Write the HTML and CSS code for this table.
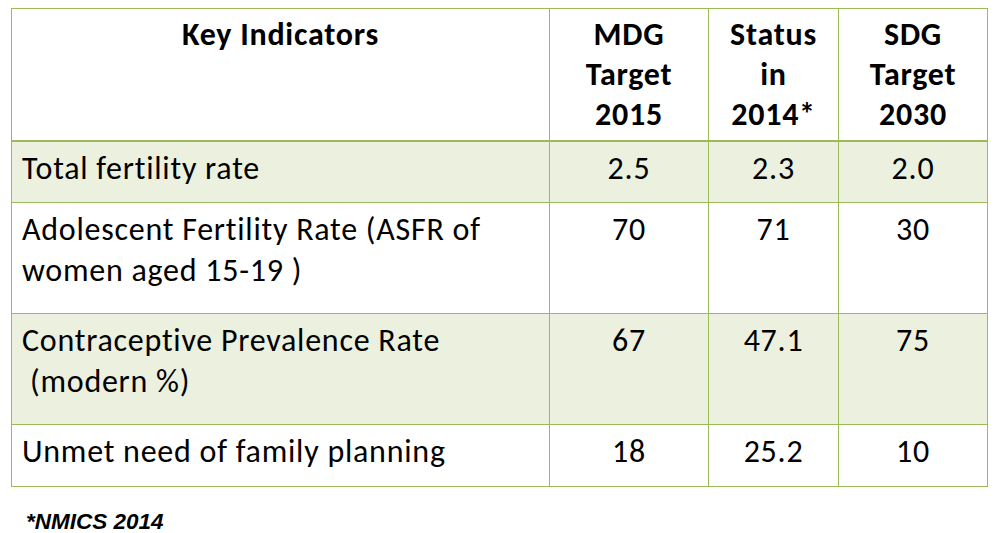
FILE: index.html
```html
<!DOCTYPE html>
<html lang="en">
<head>
<meta charset="utf-8">
<title>Key Indicators</title>
<link rel="stylesheet" href="styles.css">
</head>
<body>
<table class="indicators">
  <colgroup>
    <col class="c-name">
    <col class="c-mdg">
    <col class="c-status">
    <col class="c-sdg">
  </colgroup>
  <thead>
    <tr>
      <th>Key Indicators</th>
      <th>MDG<br>Target<br>2015</th>
      <th>Status<br>in<br>2014*</th>
      <th>SDG<br>Target<br>2030</th>
    </tr>
  </thead>
  <tbody>
    <tr class="shaded short">
      <td class="name">Total fertility rate</td>
      <td>2.5</td>
      <td>2.3</td>
      <td>2.0</td>
    </tr>
    <tr class="tall">
      <td class="name">Adolescent Fertility Rate (ASFR of women aged 15-19 )</td>
      <td>70</td>
      <td>71</td>
      <td>30</td>
    </tr>
    <tr class="shaded tall">
      <td class="name">Contraceptive Prevalence Rate<br>&nbsp;(modern %)</td>
      <td>67</td>
      <td>47.1</td>
      <td>75</td>
    </tr>
    <tr class="last">
      <td class="name">Unmet need of family planning</td>
      <td>18</td>
      <td>25.2</td>
      <td>10</td>
    </tr>
  </tbody>
</table>
<p class="source">*NMICS 2014</p>
</body>
</html>
```
FILE: styles.css
```css
html, body {
  margin: 0;
  padding: 0;
  background: #ffffff;
}

body {
  font-family: Carlito, "Open Sans", sans-serif;
  color: #000000;
}

.indicators {
  margin: 8px 0 0 11px;
  border-collapse: separate;
  border-spacing: 0;
  table-layout: fixed;
  width: 977px;
  border-top: 1px solid #9bbb59;
  border-left: 1px solid #9bbb59;
  font-size: 32px;
  letter-spacing: 0.75px;
}

.c-name { width: 538px; }
.c-mdg { width: 159px; }
.c-status { width: 130px; }
.c-sdg { width: 149px; }

.indicators th,
.indicators td {
  box-sizing: border-box;
  border-right: 1px solid #9bbb59;
  border-bottom: 1px solid #9bbb59;
  vertical-align: top;
  text-align: center;
}

.indicators th {
  height: 133px;
  padding: 6px 4px 0;
  font-weight: bold;
  line-height: 40px;
  border-bottom-width: 2px;
}

.indicators td {
  padding: 6px 4px 0;
  font-weight: normal;
  line-height: 41px;
}

.indicators td.name {
  text-align: left;
  padding-left: 10px;
  padding-right: 10px;
}

.short td { height: 61px; }
.tall td { height: 111px; }
.last td { height: 62px; }

.shaded td {
  background: #ebf1de;
}

.source {
  margin: 22px 0 0 26px;
  font-family: "Liberation Sans", Arial, sans-serif;
  font-size: 22.5px;
  line-height: 25px;
  font-weight: bold;
  font-style: italic;
}
```
